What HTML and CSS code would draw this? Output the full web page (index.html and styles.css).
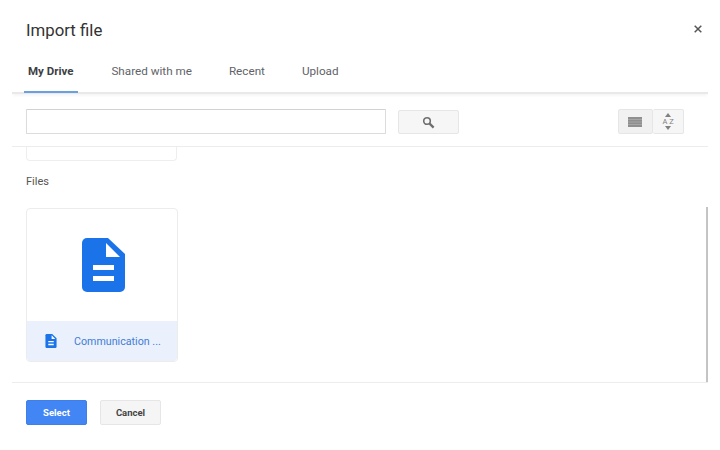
FILE: index.html
```html
<!DOCTYPE html>
<html lang="en">
<head>
<meta charset="utf-8">
<title>Import file</title>
<link rel="stylesheet" href="styles.css">
</head>
<body>
<div class="dialog">
  <header class="head">
    <h1 class="title">Import file</h1>
    <button class="close" aria-label="Close">
      <svg width="8" height="8" viewBox="0 0 8 8"><path d="M.7.7l6.6 6.6M7.3.7L.7 7.3" stroke="#555" stroke-width="1.5" fill="none"/></svg>
    </button>
  </header>
  <nav class="tabs">
    <span class="tab active">My Drive</span>
    <span class="tab">Shared with me</span>
    <span class="tab">Recent</span>
    <span class="tab">Upload</span>
  </nav>
  <div class="toolbar">
    <input class="search" type="text" aria-label="Search">
    <button class="btn-search" aria-label="Search">
      <svg width="13" height="13" viewBox="0 0 13 13"><circle cx="5" cy="5" r="3.3" fill="none" stroke="#6e6e6e" stroke-width="1.6"/><path d="M7.6 7.600l4 4" stroke="#6e6e6e" stroke-width="2.3"/></svg>
    </button>
    <div class="views">
      <button class="view pressed" aria-label="List view">
        <svg width="14" height="10" viewBox="0 0 14 10"><path d="M0 0h14v10H0z" fill="#8f8f8f"/><path d="M0 2.500h14M0 5h14M0 7.500h14" stroke="#b5b5b5" stroke-width=".6"/></svg>
      </button>
      <button class="view sort" aria-label="Sort">
        <svg class="sort-arrow" width="6" height="4" viewBox="0 0 6 4"><path d="M3 0l3 4H0z" fill="#808080"/></svg>
        <span class="az">A Z</span>
        <svg class="sort-arrow" width="6" height="4" viewBox="0 0 6 4"><path d="M3 4L0 0h6z" fill="#808080"/></svg>
      </button>
    </div>
  </div>
  <main class="content">
    <div class="stub"></div>
    <h2 class="section">Files</h2>
    <div class="card">
      <div class="thumb">
        <svg width="43" height="54" viewBox="0 0 43 54"><path d="M5 0h21l17 16v33a5 5 0 0 1-5 5H5a5 5 0 0 1-5-5V5a5 5 0 0 1 5-5z" fill="#1a73e8"/><path d="M24 5l14 14H24z" fill="#fff"/><path d="M11 27h21v5H11zM11 38h21v5H11z" fill="#fff"/></svg>
      </div>
      <div class="name">
        <svg width="12" height="14" viewBox="0 0 43 54"><path d="M5 0h21l17 16v33a5 5 0 0 1-5 5H5a5 5 0 0 1-5-5V5a5 5 0 0 1 5-5z" fill="#1a73e8"/><path d="M24 5l14 14H24z" fill="#fff"/><path d="M11 27h21v5H11zM11 38h21v5H11z" fill="#fff"/></svg>
        <span class="name-text">Communication ...</span>
      </div>
    </div>
    <div class="scrollbar"></div>
  </main>
  <footer class="foot">
    <button class="action primary">Select</button>
    <button class="action">Cancel</button>
  </footer>
</div>
</body>
</html>
```

FILE: styles.css
```css
* { box-sizing: border-box; }
html, body { margin: 0; height: 100%; background: #fff; }
body { font-family: Roboto, sans-serif; color: #444; overflow: hidden; }
button { font-family: inherit; padding: 0; cursor: pointer; }

.dialog { width: 696px; margin-left: 12px; }

.head { height: 58px; padding: 19px 3px 0 14px; display: flex; justify-content: space-between; align-items: flex-start; }
.title { margin: 0; font-size: 16.8px; font-weight: 400; line-height: 23px; color: #333; }
.close { border: 0; background: none; width: 14px; height: 14px; margin-top: 3px; display: flex; align-items: center; justify-content: center; }

.tabs { height: 36px; padding-left: 12px; display: flex; border-bottom: 2px solid #e9e9e9; box-shadow: 0 3px 2px -1px rgba(0,0,0,.04); }
.tab { padding: 0 4px; margin-right: 29px; font-size: 11.7px; line-height: 27px; color: #5f6368; height: 35px; }
.tab.active { padding-right: 5px; font-size: 11.5px; font-weight: 700; color: #3c4043; border-bottom: 2px solid #6a9fe0; }

.toolbar { height: 53px; padding: 15px 24px 0 14px; display: flex; align-items: flex-start; border-bottom: 1px solid #ececec; }
.search { width: 360px; height: 25px; border: 1px solid #dcdcdc; border-top-color: #d2d2d2; background: #fff; border-radius: 1px; }
.btn-search { width: 61px; height: 24px; margin: 1px 0 0 12px; border: 1px solid #e6e6e6; border-radius: 2px; background: #f6f6f6; display: flex; align-items: center; justify-content: center; }
.views { margin-left: auto; display: flex; }
.view { height: 25px; border: 1px solid #e6e6e6; border-radius: 2px; display: flex; align-items: center; justify-content: center; }
.pressed { width: 35px; background: #f1f1f1; padding-right: 2px; }
.sort { width: 31px; background: #f6f6f6; flex-direction: column; gap: 0; border-left: 0; }
.sort-arrow { display: block; }
.az { font-size: 7.5px; line-height: 9px; color: #808080; white-space: nowrap; }

.content { height: 235px; padding-left: 14px; position: relative; }
.stub { width: 151px; height: 14px; border: 1px solid #eee; border-top: 0; border-radius: 0 0 4px 4px; }
.section { margin: 13px 0 0; height: 34px; font-size: 11px; font-weight: 400; line-height: 15px; color: #555; }
.card { width: 152px; height: 154px; border: 1px solid #ececec; border-radius: 4px; overflow: hidden; display: flex; flex-direction: column; }
.thumb { height: 112px; padding-left: 2px; display: flex; align-items: center; justify-content: center; }
.name { flex: 1; background: #ebf1fc; display: flex; align-items: center; padding: 0 0 0 18px; gap: 17px; }
.name-text { font-size: 10.7px; line-height: 14px; padding-top: 2px; color: #3f7cd6; white-space: nowrap; }
.scrollbar { position: absolute; right: 0; top: 60px; width: 2px; height: 175px; background: #c4c4c4; }

.foot { border-top: 1px solid #ececec; padding: 17px 0 0 14px; display: flex; gap: 13px; }
.action { width: 61px; height: 25px; border: 1px solid #e6e6e6; border-radius: 2px; background: #f5f5f5; font-size: 9.5px; font-weight: 700; color: #444; }
.primary { background: #4285f4; border-color: #3f7fe8; color: #fff; }
```
